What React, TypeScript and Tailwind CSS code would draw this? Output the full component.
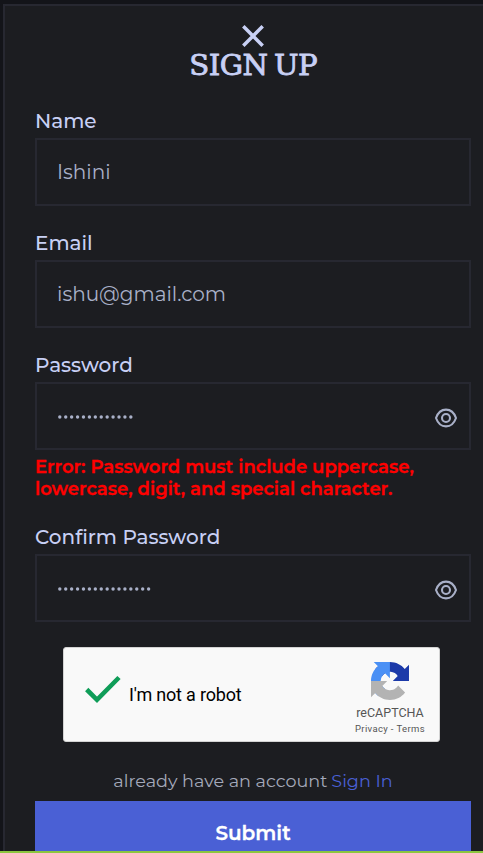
import React from "react";

type FieldProps = {
  label: string;
  children: React.ReactNode;
  secret?: boolean;
};

function EyeIcon() {
  return (
    <svg className="mt-[3px] mr-[11px]" width="24" height="22" viewBox="0 0 24 22" fill="none" stroke="#a9b0c8" strokeWidth="2.100">
      <path d="M2 11C4 5.300 7.600 2.600 12 2.600S20 5.300 22 11C20 16.700 16.400 19.400 12 19.400S4 16.700 2 11Z" />
      <circle cx="12" cy="11" r="4" />
    </svg>
  );
}

function Field({ label, children, secret }: FieldProps) {
  return (
    <div className="h-[98px] shrink-0">
      <div className="h-[30px] pt-px text-[20px] leading-[24px] font-medium whitespace-nowrap text-[#c8d0f5]">{label}</div>
      <div className="flex h-[68px] items-center justify-between border-2 border-[#272831] pl-5 text-[20px] text-[#a9b0c8]">
        {children}
        {secret && <EyeIcon />}
      </div>
    </div>
  );
}

function Dots({ count }: { count: number }) {
  return (
    <svg className="mt-px" width={count * 6} height="6">
      {Array.from({ length: count }, (_, i) => (
        <circle key={i} cx={2.800 + i * 5.920} cy="3" r="1.700" fill="#a9b0c8" />
      ))}
    </svg>
  );
}

function RecaptchaLogo() {
  return (
    <svg width="38" height="38" viewBox="0 0 64 64">
      <path fill="#1c3aa9" d="M64 31.955l-.033-1.370V4.687l-7.160 7.160C50.948 4.674 42.033.093 32.050.093c-10.400 0-19.622 4.960-25.458 12.640l11.736 11.860a15.550 15.550 0 0 1 4.754-5.334c2.050-1.600 4.952-2.906 8.968-2.906.485 0 .860.057 1.135.163 4.976.393 9.288 3.140 11.828 7.124l-8.307 8.307L64 31.953" />
      <path fill="#4a90f5" d="M31.862.094l-1.370.033H4.594l7.160 7.160C4.580 13.147 0 22.060 0 32.046c0 10.400 4.960 19.622 12.640 25.458L24.500 45.768a15.550 15.550 0 0 1-5.334-4.754c-1.600-2.050-2.906-4.952-2.906-8.968 0-.485.057-.860.163-1.135.393-4.976 3.140-9.288 7.124-11.828l8.307 8.307L31.860.095" />
      <path fill="#b3b3b3" d="M.001 32.045l.033 1.370v25.898l7.160-7.160c5.860 7.173 14.774 11.754 24.760 11.754 10.400 0 19.622-4.960 25.458-12.640l-11.736-11.860a15.550 15.550 0 0 1-4.754 5.334c-2.050 1.600-4.952 2.906-8.968 2.906-.485 0-.860-.057-1.135-.163-4.976-.393-9.288-3.140-11.828-7.124l8.307-8.307c-10.522.040-22.400.066-27.295-.005" />
    </svg>
  );
}

export default function App() {
  return (
    <main className="flex h-[853px] w-[483px] flex-col overflow-hidden bg-[#131419] font-['Montserrat','Inter',sans-serif]">
      <section className="mt-1 ml-[3px] flex h-[847px] w-[500px] shrink-0 flex-col overflow-hidden border-2 border-b-0 border-[#272831] bg-[#1c1d21] px-[30px]">
        <header className="flex h-[102px] shrink-0 flex-col items-center pt-[19px]">
          <svg className="shrink-0" width="22" height="22" viewBox="0 0 22 22" stroke="#c8d0f5" strokeWidth="3.500">
            <path d="M1.300 1.300 20.700 20.700M20.700 1.300 1.300 20.700" />
          </svg>
          <h1 className="mt-[4px] scale-x-[1.080] font-['DejaVu_Serif',serif] text-[27px] leading-[30px] tracking-[-0.5px] whitespace-nowrap text-[#c8d0f5] [-webkit-text-stroke:0.8px_#c8d0f5] [word-spacing:-2px]">SIGN UP</h1>
        </header>

        <form className="flex shrink-0 flex-col">
          <Field label="Name">
            <span>Ishini</span>
          </Field>
          <div className="h-6" />
          <Field label="Email">
            <span>ishu@gmail.com</span>
          </Field>
          <div className="h-6" />
          <Field label="Password" secret>
            <Dots count={13} />
          </Field>
          <div className="h-[74px] pt-[6px] text-[18px] leading-[22px] font-semibold whitespace-nowrap text-[#ff0000] [-webkit-text-stroke:0.3px_#ff0000]">
            <p>Error: Password must include uppercase,</p>
            <p>lowercase, digit, and special character.</p>
          </div>
          <Field label="Confirm Password" secret>
            <Dots count={16} />
          </Field>

          <div className="mt-[25px] ml-7 flex h-[95px] w-[377px] rounded-[3px] border border-[#d3d3d3] bg-[#f9f9f9] font-['Roboto',sans-serif]">
            <svg className="mt-[27px] ml-[21px]" width="36" height="29" viewBox="0 0 36 29" fill="none" stroke="#0f9d58" strokeWidth="4.600">
              <path d="M1.700 14.500 12 24.800 34 2.500" />
            </svg>
            <span className="mt-[35px] ml-[8px] w-[218px] text-[18px] leading-6 tracking-[-0.2px] whitespace-nowrap text-black">I'm not a robot</span>
            <div className="flex w-[86px] flex-col items-center text-[#555555]">
              <div className="mt-[14px]"><RecaptchaLogo /></div>
              <span className="mt-[5px] text-[12.500px] leading-4">reCAPTCHA</span>
              <span className="mt-[1px] text-[9.500px] leading-[14px] tracking-[0.350px] whitespace-nowrap">Privacy&nbsp;-&nbsp;Terms</span>
            </div>
          </div>

          <p className="flex h-[59px] items-end justify-center pb-[8px] text-[17.600px] leading-6 whitespace-nowrap text-[#a4a9ba]">
            <span>already have an account</span>
            <a className="ml-[4px] text-[#4a60d5]">Sign In</a>
          </p>
          <button type="button" className="h-[64px] bg-[#4a60d5] text-[20px] leading-6 font-semibold text-white [-webkit-text-stroke:0.3px_#ffffff]">Submit</button>
        </form>
      </section>
      <div className="h-[2px] shrink-0 bg-[#8cc63f]" />
    </main>
  );
}
